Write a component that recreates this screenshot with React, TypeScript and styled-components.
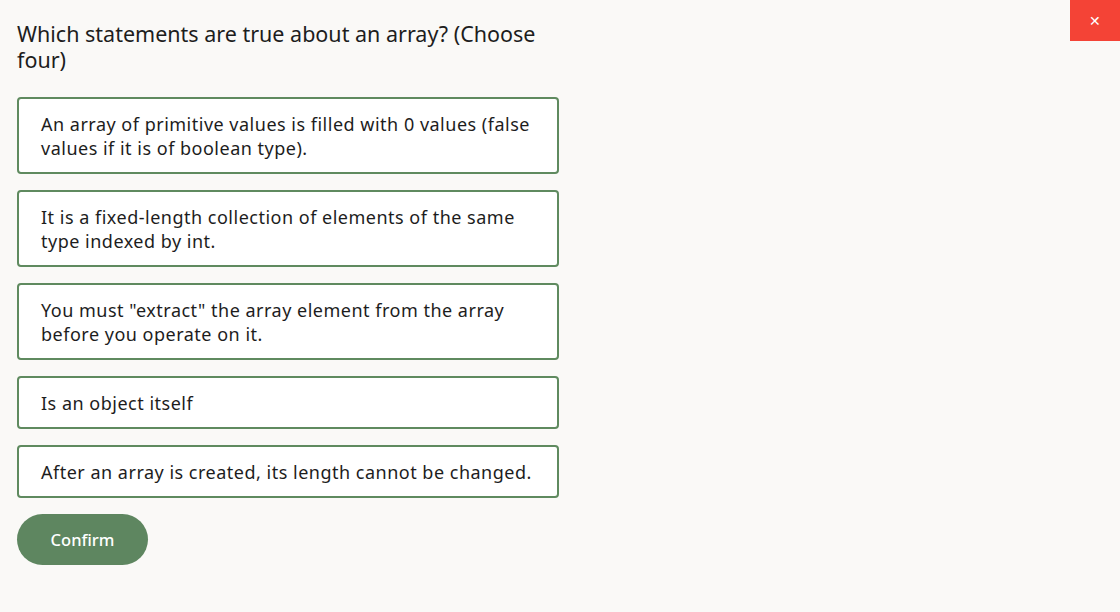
import React from 'react';
import styled, { createGlobalStyle } from 'styled-components';

const Global = createGlobalStyle`
  html, body {
    margin: 0;
    padding: 0;
    background: #faf9f7;
    font-family: "Noto Sans", "Open Sans", "Liberation Sans", sans-serif;
    font-variant-ligatures: none;
    color: #1f1f1f;
  }
`;

const Page = styled.div`
  position: relative;
  min-height: 612px;
  padding: 21px 17px;
  box-sizing: border-box;
`;

const Close = styled.button`
  position: absolute;
  top: 0;
  right: 0;
  width: 50px;
  height: 41px;
  border: none;
  background: #f44336;
  color: #fff;
  font-size: 14px;
  line-height: 1;
  cursor: pointer;
  padding: 0;
`;

const Question = styled.h1`
  margin: 0 0 24px;
  width: 542px;
  font-size: 21.5px;
  font-weight: 400;
  line-height: 26px;
  color: #1d1d1d;
`;

const Options = styled.div`
  display: flex;
  flex-direction: column;
  gap: 16px;
  width: 542px;
`;

const Option = styled.button`
  display: block;
  width: 100%;
  text-align: left;
  background: #fff;
  border: 2px solid #5f8a5f;
  border-radius: 4px;
  padding: 13px 22px 12px;
  font-family: inherit;
  font-size: 18px;
  letter-spacing: 0.5px;
  line-height: 24px;
  color: #1d1d1d;
  cursor: pointer;
`;

const Confirm = styled.button`
  margin-top: 16px;
  width: 131px;
  height: 51px;
  border: none;
  border-radius: 26px;
  background: #5e8660;
  color: #fff;
  font-family: inherit;
  font-size: 16.5px;
  font-weight: 500;
  cursor: pointer;
`;

const options = [
  'An array of primitive values is filled with 0 values (false values if it is of boolean type).',
  'It is a fixed-length collection of elements of the same type indexed by int.',
  'You must "extract" the array element from the array before you operate on it.',
  'Is an object itself',
  'After an array is created, its length cannot be changed.',
];

export default function App() {
  return (
    <Page>
      <Global />
      <Close>✕</Close>
      <Question>Which statements are true about an array? (Choose four)</Question>
      <Options>
        {options.map((o) => (
          <Option key={o}>{o}</Option>
        ))}
      </Options>
      <Confirm>Confirm</Confirm>
    </Page>
  );
}
